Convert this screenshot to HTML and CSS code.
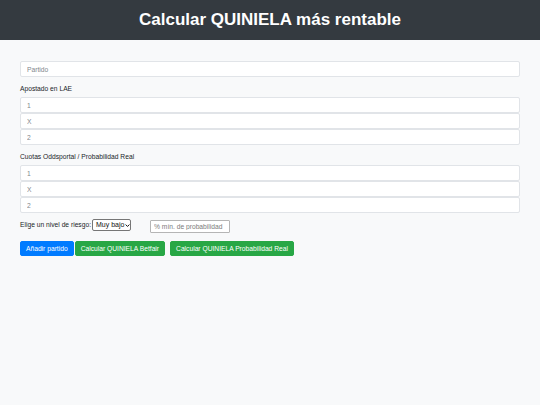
FILE: index.html
```html
<!DOCTYPE html>
<html lang="es">
<head>
<meta charset="utf-8">
<title>Calcular QUINIELA más rentable</title>
<link rel="stylesheet" href="styles.css">
</head>
<body>
<header class="topbar">
  <h1 class="title">Calcular QUINIELA más rentable</h1>
</header>
<main class="container">
  <input class="field" type="text" placeholder="Partido">
  <label class="label">Apostado en LAE</label>
  <div class="group">
    <input class="field" type="text" placeholder="1">
    <input class="field" type="text" placeholder="X">
    <input class="field" type="text" placeholder="2">
  </div>
  <label class="label">Cuotas Oddsportal / Probabilidad Real</label>
  <div class="group">
    <input class="field" type="text" placeholder="1">
    <input class="field" type="text" placeholder="X">
    <input class="field" type="text" placeholder="2">
  </div>
  <div class="risk-row">
    <span class="risk-label">Elige un nivel de riesgo:</span>
    <span class="select"><span class="select-text">Muy bajo</span><svg class="chev" viewBox="0 0 8 8" width="5" height="5"><path d="M1 2.5 L4 5.5 L7 2.5" fill="none" stroke="#111" stroke-width="1.6"/></svg></span>
    <input class="prob" type="text" placeholder="% mín. de probabilidad">
  </div>
  <div class="actions">
    <button class="btn btn-blue">Añadir partido</button>
    <button class="btn btn-green btn-betfair">Calcular QUINIELA Betfair</button>
    <button class="btn btn-green">Calcular QUINIELA Probabilidad Real</button>
  </div>
</main>
</body>
</html>
```
FILE: styles.css
```css
* { box-sizing: border-box; }
html, body { margin: 0; padding: 0; }
body {
  background: #f8f9fa;
  font-family: "Liberation Sans", Arial, sans-serif;
  color: #212529;
  width: 540px;
  height: 405px;
  overflow: hidden;
}
.topbar {
  background: #343a40;
  height: 40px;
  display: flex;
  align-items: center;
  justify-content: center;
}
.title {
  margin: 0;
  color: #fff;
  font-size: 17px;
  font-weight: bold;
  line-height: 20px;
}
.container {
  padding: 21px 20px 0 20px;
  display: flex;
  flex-direction: column;
}
.field {
  display: block;
  width: 500px;
  height: 16px;
  margin: 0;
  padding: 0 6px;
  border: 1px solid #e1e4e8;
  border-radius: 2px;
  background: #fff;
  font-family: "Liberation Sans", Arial, sans-serif;
  font-size: 6.7px;
  color: #495057;
  outline: none;
}
.field::placeholder { color: #80868c; }
.label {
  display: block;
  margin-top: 7px;
  margin-bottom: 3px;
  line-height: 10px;
  font-size: 6.7px;
}
.group { display: flex; flex-direction: column; }
.risk-row {
  display: flex;
  align-items: flex-start;
  margin-top: 6px;
  height: 14px;
  font-size: 6.7px;
}
.risk-label {
  line-height: 12px;
  margin-right: 1px;
  white-space: nowrap;
}
.select {
  display: inline-flex;
  align-items: center;
  gap: 1px;
  height: 12px;
  width: 39px;
  padding: 0 2px 0 3px;
  border: 1px solid #767676;
  border-radius: 2px;
  background: #fff;
  color: #111;
  font-size: 7px;
  white-space: nowrap;
  flex: none;
}
.select-text { line-height: 10px; }
.chev { display: block; flex: none; }
.prob {
  margin: 1px 0 0 19px;
  width: 80px;
  height: 13px;
  padding: 0 3px;
  border: 1px solid #b5b5b5;
  border-radius: 1px;
  background: #fff;
  font-family: "Liberation Sans", Arial, sans-serif;
  font-size: 6.7px;
  outline: none;
  flex: none;
}
.prob::placeholder { color: #7b7b7b; }
.actions {
  display: flex;
  margin-top: 8px;
}
.btn {
  height: 15px;
  padding: 0 5px;
  border: 1px solid transparent;
  border-radius: 2px;
  color: #fff;
  font-family: "Liberation Sans", Arial, sans-serif;
  font-size: 6.7px;
  line-height: 13px;
  margin: 0 2px 0 0;
  white-space: nowrap;
  cursor: pointer;
}
.btn-blue { background: #007bff; border-color: #007bff; margin-right: 1px; }
.btn-green { background: #28a745; border-color: #28a745; }
.btn-betfair { margin-right: 5px; }
```
